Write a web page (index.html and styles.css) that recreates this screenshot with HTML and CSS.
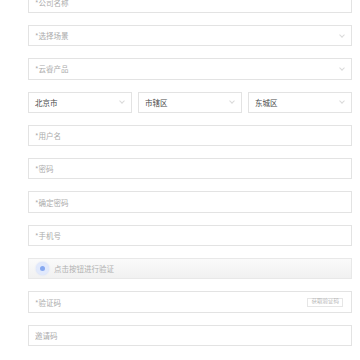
FILE: index.html
```html
<!DOCTYPE html>
<html lang="zh-CN">

<head>
  <meta charset="UTF-8">
  <meta name="viewport" content="width=device-width, initial-scale=1.0">
  <title>注册</title>
  <link rel="stylesheet" href="styles.css">
</head>

<body>
  <form class="reg-form">
    <div class="field">
      <input type="text" placeholder="*公司名称">
    </div>

    <div class="field select">
      <span class="placeholder">*选择场景</span>
      <span class="arrow"></span>
    </div>

    <div class="field select">
      <span class="placeholder">*云睿产品</span>
      <span class="arrow"></span>
    </div>

    <div class="area-row">
      <div class="field select">
        <span class="value">北京市</span>
        <span class="arrow"></span>
      </div>
      <div class="field select">
        <span class="value">市辖区</span>
        <span class="arrow"></span>
      </div>
      <div class="field select">
        <span class="value">东城区</span>
        <span class="arrow"></span>
      </div>
    </div>

    <div class="field">
      <input type="text" placeholder="*用户名">
    </div>

    <div class="field">
      <input type="password" placeholder="*密码">
    </div>

    <div class="field">
      <input type="password" placeholder="*确定密码">
    </div>

    <div class="field">
      <input type="text" placeholder="*手机号">
    </div>

    <div class="field verify">
      <span class="verify-icon"><span class="dot"></span></span>
      <span class="verify-text">点击按钮进行验证</span>
    </div>

    <div class="field">
      <input type="text" placeholder="*验证码">
      <button type="button" class="code-btn">获取验证码</button>
    </div>

    <div class="field">
      <input type="text" placeholder="邀请码">
    </div>
  </form>
</body>

</html>
```

FILE: styles.css
```css
body {
  margin: 0;
  background-color: #fff;
  font-family: "Noto Sans CJK SC", "Liberation Sans", sans-serif;
  font-size: 7.5px;
  color: #333;
  overflow: hidden;
}

.reg-form {
  margin-top: -8.3px;
  padding: 0 8px 0 28px;
  display: flex;
  flex-direction: column;
  gap: 12px;
}

.field {
  box-sizing: border-box;
  height: 21.3px;
  border: 1px solid #e3e3e3;
  background: #fff;
  display: flex;
  align-items: center;
  padding: 0 6px;
  position: relative;
}

.field input {
  flex: 1;
  min-width: 0;
  border: none;
  outline: none;
  background: transparent;
  padding: 0;
  font-family: inherit;
  font-size: 7.5px;
  color: #333;
}

.field input::placeholder {
  color: #ababab;
}

.select {
  justify-content: space-between;
}

.placeholder {
  color: #ababab;
}

.value {
  color: #4a4a4a;
}

.arrow {
  width: 3px;
  height: 3px;
  border-right: 1px solid #dadada;
  border-bottom: 1px solid #dadada;
  transform: rotate(45deg);
  margin-right: 1px;
  margin-top: -2px;
}

.area-row {
  display: grid;
  grid-template-columns: repeat(3, 1fr);
  gap: 6px;
}

.verify {
  background: linear-gradient(#fafafa, #f1f1f1);
  border-color: #e8e8e8;
  padding-left: 7px;
  gap: 5px;
}

.verify-icon {
  width: 13px;
  height: 13px;
  border-radius: 50%;
  background: #e1e9fc;
  box-shadow: 0 0 2px #c9d7f8;
  display: flex;
  align-items: center;
  justify-content: center;
}

.verify-icon .dot {
  width: 5px;
  height: 5px;
  border-radius: 50%;
  background: #86a8f0;
}

.verify-text {
  color: #b0b0b0;
}

.code-btn {
  border: 1px solid #e6e6e6;
  background: #fff;
  color: #b8b8b8;
  font-family: inherit;
  font-size: 5.5px;
  height: 9px;
  padding: 0 3px;
  margin-right: 2px;
  line-height: 1;
}
```
